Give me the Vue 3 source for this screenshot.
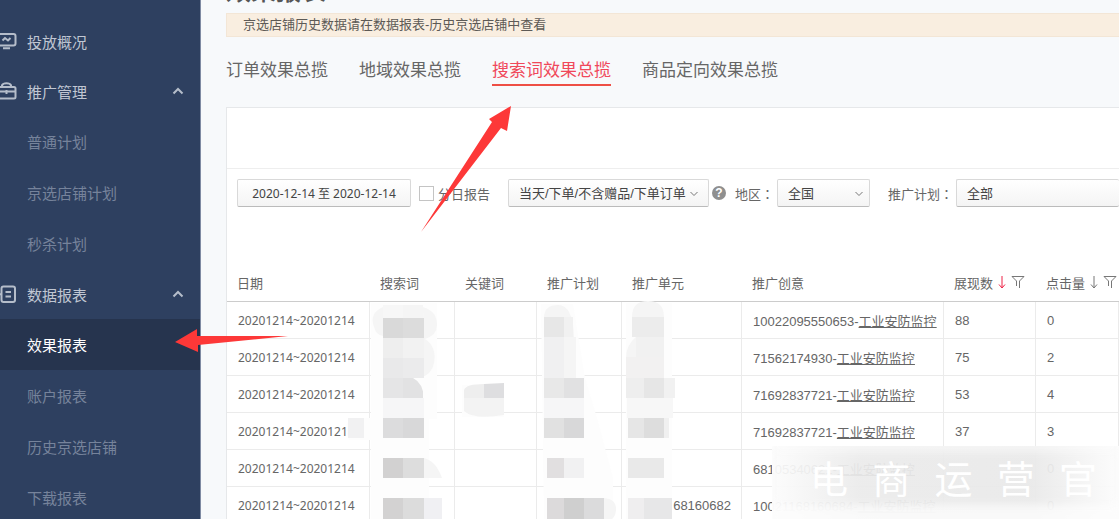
<script setup>
import { ref } from 'vue'

const menu = [
  { label: '投放概况', icon: 'monitor' },
  { label: '推广管理', icon: 'briefcase', open: true },
  { label: '普通计划', sub: true },
  { label: '京选店铺计划', sub: true },
  { label: '秒杀计划', sub: true },
  { label: '数据报表', icon: 'report', open: true },
  { label: '效果报表', sub: true, active: true },
  { label: '账户报表', sub: true },
  { label: '历史京选店铺', sub: true },
  { label: '下载报表', sub: true }
]

const tabs = ['订单效果总揽', '地域效果总揽', '搜索词效果总揽', '商品定向效果总揽']
const currentTab = ref('搜索词效果总揽')
const daily = ref(false)

const date = '20201214~20201214'
const rows = [
  { unit: '', id: '10022095550653-', name: '工业安防监控', shows: 88, clicks: 0 },
  { unit: '', id: '71562174930-', name: '工业安防监控', shows: 75, clicks: 2 },
  { unit: '', id: '71692837721-', name: '工业安防监控', shows: 53, clicks: 4 },
  { unit: '', id: '71692837721-', name: '工业安防监控', shows: 37, clicks: 3 },
  { unit: '', id: '68105340621-', name: '工业安防监控', shows: '', clicks: 0 },
  { unit: '68160682', id: '10021168160684-', name: '工业安防监控', shows: '', clicks: 0 }
]

const blocks = [
  [383, 305, 20, 13, '#f7f7f7'], [403, 305, 20, 13, '#f5f5f5'],
  [383, 318, 20, 20, '#d9d9d9'], [403, 318, 21, 20, '#dcdcdc'],
  [383, 338, 20, 20, '#eeeeee'], [403, 338, 21, 20, '#f2f2f2'],
  [383, 358, 20, 20, '#e9e9ea'], [403, 358, 21, 20, '#ebebec'],
  [383, 378, 20, 20, '#e5e5e6'], [403, 378, 20, 20, '#e2e2e3'],
  [383, 398, 41, 20, '#f6f6f7'],
  [383, 418, 20, 20, '#dcdcdd'], [403, 418, 21, 20, '#d8d8d9'],
  [348, 418, 16, 20, '#f1f1f2'],
  [383, 458, 20, 20, '#d2d1d1'], [403, 458, 21, 20, '#dddddd'],
  [383, 498, 20, 21, '#d3d2d2'], [403, 498, 21, 21, '#dcdcdc'], [424, 498, 18, 21, '#f0f0f3'],
  [544, 317, 20, 20, '#e7e7e7'], [564, 317, 9, 20, '#f1f1f1'],
  [544, 337, 20, 41, '#f0f0f1'], [564, 337, 12, 41, '#f5f5f5'],
  [544, 378, 20, 20, '#e8e8e8'], [564, 378, 20, 20, '#e1e1e2'],
  [544, 398, 40, 20, '#f6f6f7'],
  [544, 418, 20, 20, '#e1e1e1'], [564, 418, 20, 20, '#d8d8d9'],
  [547, 458, 17, 20, '#e1dfe0'], [564, 458, 20, 20, '#f1f1f2'],
  [547, 498, 17, 21, '#dcdadb'], [564, 498, 20, 21, '#cfcfcf'], [584, 498, 20, 21, '#dbdbdc'],
  [632, 317, 32, 20, '#ececec'], [636, 337, 28, 20, '#f1f1f1'],
  [626, 357, 38, 21, '#f2f1f1'],
  [626, 378, 18, 20, '#eeeeee'], [644, 378, 20, 20, '#e6e6e6'], [664, 378, 11, 20, '#f1f1f1'],
  [627, 398, 46, 20, '#f7f7f7'],
  [628, 418, 16, 20, '#e6e6e6'], [644, 418, 20, 20, '#dddddd'], [664, 418, 5, 20, '#f0f0f0'],
  [628, 458, 36, 20, '#e9e9e9'],
  [628, 498, 16, 21, '#efeeef'], [644, 498, 28, 21, '#e7e7e8']
]
</script>

<template>
  <div class="page">
    <aside class="sidebar">
      <nav>
        <a
          v-for="item in menu"
          :key="item.label"
          href="#"
          class="item"
          :class="{ sub: item.sub, active: item.active }"
        >
          <svg v-if="item.icon === 'monitor'" class="icon" viewBox="0 0 17 18" aria-hidden="true">
            <rect x="-2" y="2" width="17.500" height="11.500" rx="2" />
            <path d="M2.500 8.500 5 6l3 2.500L10.500 6M3 16.300h7" />
          </svg>
          <svg v-if="item.icon === 'briefcase'" class="icon" viewBox="0 0 17 18" aria-hidden="true">
            <rect x="-2" y="5" width="17.500" height="11.500" rx="1.500" />
            <path d="M2 5V3.200Q3 1.200 6.500 1.200T11 3.200V5M-1 9.500h16M6.500 8v4" />
          </svg>
          <svg v-if="item.icon === 'report'" class="icon" viewBox="0 0 17 18" aria-hidden="true">
            <rect x="1.500" y="1.500" width="13.500" height="15.500" rx="2" />
            <path d="M5.500 7H11M5.500 11.500H11M-1 9.300h3" />
          </svg>
          <span class="label">{{ item.label }}</span>
          <svg v-if="item.open" class="caret" viewBox="0 0 12 8" aria-hidden="true">
            <path d="M1.500 6.500 6 2l4.500 4.500" />
          </svg>
        </a>
      </nav>
    </aside>

    <main class="main">
      <h1>效果报表</h1>
      <p class="notice">京选店铺历史数据请在数据报表-历史京选店铺中查看</p>

      <nav class="tabs">
        <a
          v-for="tab in tabs"
          :key="tab"
          href="#"
          :class="{ current: tab === currentTab }"
          @click.prevent="currentTab = tab"
        >{{ tab }}</a>
      </nav>

      <section class="panel">
        <div class="panel-head"></div>
        <form class="filters" @submit.prevent>
          <button type="button" class="control date">2020-12-14 至 2020-12-14</button>
          <label class="check"><input v-model="daily" type="checkbox" />分日报告</label>
          <span class="picker metric">
            <select class="control" aria-label="统计口径"><option>当天/下单/不含赠品/下单订单</option></select>
            <svg viewBox="0 0 10 6" aria-hidden="true"><path d="M1.500 1 5 4.500 8.500 1" /></svg>
          </span>
          <button type="button" class="help" aria-label="帮助">?</button>
          <label class="name" for="area">地区<span class="colon">：</span></label>
          <span class="picker area">
            <select id="area" class="control"><option>全国</option></select>
            <svg viewBox="0 0 10 6" aria-hidden="true"><path d="M1.500 1 5 4.500 8.500 1" /></svg>
          </span>
          <label class="name plan-name" for="plan">推广计划<span class="colon">：</span></label>
          <span class="picker plan">
            <select id="plan" class="control"><option>全部</option></select>
          </span>
        </form>

        <table>
          <colgroup>
            <col class="c-date" /><col class="c-word" /><col class="c-key" /><col class="c-plan" />
            <col class="c-unit" /><col class="c-idea" /><col class="c-show" /><col class="c-click" />
          </colgroup>
          <thead>
            <tr>
              <th>日期</th>
              <th>搜索词</th>
              <th>关键词</th>
              <th>推广计划</th>
              <th>推广单元</th>
              <th>推广创意</th>
              <th v-for="(h, i) in ['展现数', '点击量']" :key="h">
                <span class="sortable">
                  {{ h }}
                  <svg class="arrow" :class="{ on: i === 0 }" viewBox="0 0 10 14" aria-hidden="true">
                    <path d="M5 1v12M2 9.500l3 3.500 3-3.500" />
                  </svg>
                  <svg class="funnel" viewBox="0 0 14 14" aria-hidden="true">
                    <path d="M1 1.500h12L8.500 6v7M1 1.500 5.500 6v5" />
                  </svg>
                </span>
              </th>
            </tr>
          </thead>
          <tbody>
            <tr v-for="(r, i) in rows" :key="i">
              <td class="day">{{ date }}</td>
              <td></td>
              <td></td>
              <td></td>
              <td class="unit">{{ r.unit }}</td>
              <td>{{ r.id }}<a href="#">{{ r.name }}</a></td>
              <td>{{ r.shows }}</td>
              <td>{{ r.clicks }}</td>
            </tr>
          </tbody>
        </table>
      </section>
    </main>

    <svg class="overlay" width="1119" height="519" viewBox="0 0 1119 519" aria-hidden="true">
      <g fill="#fdfdfd">
        <path d="M371 303h66v116h-8v100h-58V440h-22q-5-12 0-22h22z" />
        <path d="M541 304h32l12 74 12 40 16 60v41h-69z" />
        <path d="M626 303h46v216h-46z" />
        <path d="M462 385h42v32h-42z" />
      </g>
      <g fill="#f5f5f5">
        <path d="M383 307q-14 6-9 20 2 8 9 9zM423 307q14 4 14 18 0 10-12 14 12 8 9 24-2 12-15 15l5-2zM424 458q12 3 18 20h-18z" />
        <path d="M544 318q0-13 14-13 15 0 16 32l2 42h-32zM632 317q0-16 16-16 16 0 16 16zM636 337q-10 8-10 21h38v-21z" />
        <path d="M604 498q12 1 12 11 0 7-4 10h-8z" />
      </g>
      <rect v-for="(b, i) in blocks" :key="i" :x="b[0]" :y="b[1]" :width="b[2]" :height="b[3]" :fill="b[4]" />
      <path fill="#fdfdfd" d="M413 378h11v20q-1-15-11-20z" />
      <path fill="#eeeeee" d="M464 390q2-6 20-6v14h-20z" />
      <path fill="#dedee0" d="M484 384l20-1v15h-20z" />
      <path fill="#f3f3f3" d="M464 398h40v17q-30 5-40-4z" />
      <path fill="#fd3838" d="M511 106 507 131 501 128 421 232 492 122 489 119z" />
      <path fill="#fd3838" d="M175 342 197 329V336L288 336 198 345V352z" />
    </svg>

    <div class="watermark">
      <span v-for="c in '电商运营官'" :key="c">{{ c }}</span>
    </div>
  </div>
</template>

<style>
body {
  margin: 0;
  overflow: hidden;
}
</style>

<style scoped>
.page {
  position: relative;
  display: flex;
  height: 100vh;
  overflow: hidden;
  background: #f7f9fb;
  color: #666;
  font-family: "Liberation Sans", "Noto Sans CJK SC", sans-serif;
  font-size: 13px;
}
a {
  color: inherit;
  text-decoration: none;
}
.sidebar {
  flex: none;
  box-sizing: border-box;
  width: 201px;
  padding-top: 16px;
  background: #2e4060;
  border-right: 1px solid #7f8ba3;
}
.item {
  display: flex;
  align-items: center;
  height: 50px;
  padding-right: 16px;
  color: #c0c7d3;
  font-size: 15px;
}
.item.sub {
  height: 51px;
  padding-left: 27px;
  color: #76839b;
}
.item.active {
  background: #26344e;
  color: #fff;
}
.icon {
  width: 17px;
  height: 18px;
  margin-right: 10px;
  fill: none;
  stroke: #b5bdca;
  stroke-width: 2;
}
.label {
  flex: 1;
}
.caret {
  width: 12px;
  height: 8px;
  fill: none;
  stroke: #b5bdca;
  stroke-width: 2;
}
.main {
  flex: 1;
  min-width: 0;
  padding-left: 25px;
  overflow: hidden;
}
h1 {
  margin: -24px 0 7px;
  color: #555;
  font-size: 25px;
  font-weight: 500;
  line-height: 30px;
}
.notice {
  margin: 0;
  padding-left: 16px;
  border: 1px solid #f3e6d6;
  border-right: 0;
  background: #f9eee0;
  color: #5d5a56;
  line-height: 22px;
}
.tabs {
  display: flex;
  gap: 31px;
  height: 70px;
  align-items: flex-start;
}
.tabs a {
  margin-top: 21px;
  border-bottom: 2px solid transparent;
  color: #666;
  font-size: 17px;
  line-height: 26px;
}
.tabs a.current {
  border-color: #ee4f45;
  color: #f0485a;
}
.panel {
  border: 1px solid #e6e8ea;
  border-right: 0;
  background: #fff;
}
.panel-head {
  height: 60px;
  border-bottom: 1px solid #eee;
}
.filters {
  display: flex;
  align-items: center;
  height: 28px;
  padding: 10px 0 56px 10px;
}
.control {
  box-sizing: border-box;
  width: 100%;
  height: 28px;
  padding: 0 10px;
  border: 1px solid #d9d9d9;
  border-bottom-color: #bbb;
  border-radius: 2px;
  background: linear-gradient(#fff, #f4f4f4);
  color: #444;
  font: inherit;
  appearance: none;
  white-space: nowrap;
}
.date {
  flex: none;
  width: 174px;
  padding: 0;
  font-family: "Noto Sans", "Noto Sans CJK SC", sans-serif;
  font-size: 12px;
}
.check {
  display: flex;
  flex: none;
  align-items: center;
  width: 97px;
}
.check input {
  width: 15px;
  height: 15px;
  margin: 0 4px 0 8px;
  border: 1px solid #c4c4c4;
  background: #fff;
  appearance: none;
}
.check input:checked {
  background: #ee4f45;
}
.picker {
  position: relative;
  flex: none;
}
.picker svg {
  position: absolute;
  top: 12px;
  right: 6px;
  width: 10px;
  height: 6px;
  fill: none;
  stroke: #777;
  pointer-events: none;
}
.metric {
  width: 201px;
}
.metric svg {
  right: 10px;
}
.area {
  width: 93px;
}
.plan {
  flex: 1;
  min-width: 163px;
}
.plan .control {
  border-right: 0;
}
.help {
  flex: none;
  width: 14px;
  height: 14px;
  margin: 0 9px 0 3px;
  padding: 0;
  border: 0;
  border-radius: 50%;
  background: #8f8f8f;
  color: #fff;
  font: bold 12px/14px "Liberation Sans", sans-serif;
}
.name {
  flex: none;
  width: 42px;
  white-space: nowrap;
}
.colon {
  font-family: "Noto Sans CJK TC", sans-serif;
}
.plan-name {
  width: 68px;
  margin-left: 18px;
}
table {
  width: 100%;
  border-collapse: separate;
  border-spacing: 0;
  table-layout: fixed;
}
.c-date { width: 143px; }
.c-word { width: 85px; }
.c-key { width: 82px; }
.c-plan { width: 85px; }
.c-unit { width: 120px; }
.c-idea { width: 202px; }
.c-show { width: 92px; }
th {
  height: 38px;
  padding: 0 0 0 10px;
  border-bottom: 1px solid #ccc;
  font-weight: 400;
  text-align: left;
  white-space: nowrap;
}
td {
  box-sizing: border-box;
  height: 37px;
  padding: 0 0 0 11px;
  border-right: 1px solid #ebebeb;
  border-bottom: 1px solid #ebebeb;
  white-space: nowrap;
}
.day {
  font-family: "Noto Sans", sans-serif;
  font-size: 12px;
}
.unit {
  padding-right: 10px;
  text-align: right;
}
td a {
  text-decoration: underline;
}
.sortable {
  display: flex;
  align-items: center;
}
.sortable svg {
  flex: none;
  height: 14px;
  fill: none;
  stroke: #777;
}
.arrow {
  width: 10px;
  margin-left: 4px;
}
.sortable .arrow.on {
  stroke: #ee2347;
}
.funnel {
  width: 14px;
  margin-left: 4px;
}
.overlay {
  position: absolute;
  top: 0;
  left: 0;
  pointer-events: none;
}
.watermark {
  position: absolute;
  right: 0;
  bottom: 0;
  display: flex;
  box-sizing: border-box;
  width: 347px;
  height: 73px;
  padding: 0 22px 6px 38px;
  align-items: center;
  justify-content: space-between;
  background: linear-gradient(90deg, #fcfcfcee, #ebebebee 25%, #e9e9e9ee 75%, #fcfcfcee);
  box-shadow: inset 0 -14px 10px #fcfcfccc, inset 0 6px 8px #fcfcfc99;
  color: #fff;
  font-size: 38px;
  line-height: 1;
  pointer-events: none;
}
</style>
